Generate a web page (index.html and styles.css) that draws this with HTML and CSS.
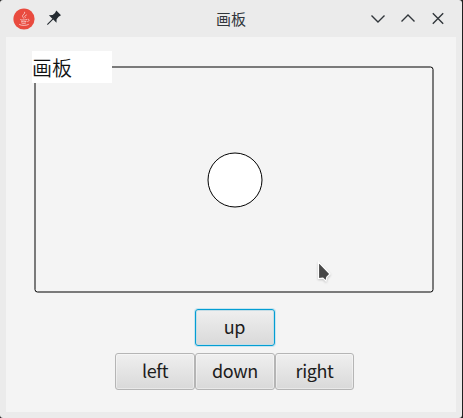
FILE: index.html
```html
<!DOCTYPE html>
<html lang="zh-CN">
<head>
<meta charset="utf-8">
<title>画板</title>
<link rel="stylesheet" href="styles.css">
</head>
<body>
<div class="window">
  <header class="titlebar">
    <div class="side">
      <svg class="java" width="22" height="22" viewBox="0 0 22 22">
        <circle cx="11" cy="11" r="10.6" fill="#e94b3f"/>
        <g fill="none" stroke="#fff" stroke-width=".9" stroke-linecap="round" opacity=".7">
          <path d="M11.8 4.2c.8 1.6-3 2.6-2.2 4.3.3.7.9 1.2 1.1 1.7M13.4 7c-1.6.7-2.2 1.4-1.2 2.500"/>
          <path d="M7.6 11.4c-1.6.8 4 .8 6 .2M8.3 13.3c.6.7 3.4.7 4.8.1M8.6 15c.8.6 3 .6 4 .1M15 11.3c2-.1 1.3 1.9-.3 2.3M6.500 16.6c1.8 1.3 7.6 1 9-.1"/>
        </g>
      </svg>
      <svg class="pin" width="16" height="16" viewBox="0 0 16 16">
        <path d="M10.300 .6 15 5.300l-2.400 1.500-2 2.500-.1 3.500L7.200 9.500 2.200 14.500l-1.300.6.500-1.400L6.400 8.700 2.900 5.200l3.700-.1L9 3z" fill="#252c32"/>
      </svg>
    </div>
    <h1 class="title">画板</h1>
    <div class="side controls">
      <svg width="16" height="16" viewBox="0 0 16 16"><path d="M1.500 4.500 8 11 14.500 4.500"/></svg>
      <svg width="16" height="16" viewBox="0 0 16 16"><path d="M1.500 10.500 8 4 14.500 10.500"/></svg>
      <svg width="16" height="16" viewBox="0 0 16 16"><path d="M2.800 2.300 13.200 12.700M13.200 2.300 2.800 12.700"/></svg>
    </div>
  </header>
  <main class="content">
    <div class="board">
      <svg width="400" height="227" viewBox="0 0 400 227">
        <rect x="1" y="1" width="398" height="225" rx="2.500" fill="none" stroke="#000"/>
        <circle cx="201" cy="114" r="27" fill="#fff" stroke="#000"/>
      </svg>
      <span class="legend">画板</span>
    </div>
    <div class="row"><button class="btn focused">up</button></div>
    <div class="row"><button class="btn">left</button><button class="btn">down</button><button class="btn">right</button></div>
  </main>
  <svg class="cursor" width="20" height="26" viewBox="0 0 20 26">
    <path d="M3.500 3v16.500l4.500-.3 3 3 .8-4 3.200-3.200z" fill="#474747" stroke="#fff" stroke-width="1.200" stroke-linejoin="round"/>
  </svg>
</div>
</body>
</html>
```
FILE: styles.css
```css
body {
  margin: 0;
  background: #202020;
  font-family: "Noto Sans CJK SC", sans-serif;
}
.window {
  position: relative;
  box-sizing: border-box;
  width: 462px;
  height: 418px;
  padding: 0 6px 6px;
  background: #ebebeb;
  border-radius: 3px;
}
.titlebar {
  display: flex;
  align-items: center;
  justify-content: space-between;
  height: 37px;
}
.side {
  display: flex;
  align-items: center;
  width: 90px;
}
.java { margin-left: 7px; }
.pin { margin: -2px 0 0 11px; }
.title {
  margin: 0;
  font-size: 15px;
  font-weight: 400;
  line-height: 37px;
  color: #31363b;
}
.controls {
  justify-content: flex-end;
  gap: 14px;
  padding-right: 10px;
  width: 80px;
}
.controls path {
  fill: none;
  stroke: #31363b;
  stroke-width: 1.4;
}
.content {
  box-sizing: border-box;
  height: 375px;
  padding: 29px 0 0 28px;
  background: #f4f4f4;
}
.board {
  position: relative;
  width: 400px;
  height: 227px;
  margin-bottom: 16px;
}
.board svg { display: block; }
.legend {
  position: absolute;
  left: -2px;
  top: -15px;
  box-sizing: border-box;
  width: 80px;
  height: 32px;
  padding-top: 1px;
  background: #fff;
  color: #111;
  font-size: 20px;
  font-weight: 350;
  line-height: 32px;
}
.row {
  display: flex;
  justify-content: center;
  width: 401px;
  margin-bottom: 7px;
}
.btn {
  box-sizing: border-box;
  width: 80px;
  height: 37px;
  padding: 0 0 2px;
  border: 1px solid #b5b5b5;
  border-radius: 3px;
  background: linear-gradient(#efefef, #d9d9d9);
  box-shadow: inset 0 0 0 1px rgba(255, 255, 255, .4);
  color: #1c1c1c;
  font: 18px/33px "Noto Sans CJK SC", sans-serif;
  letter-spacing: -.4px;
}
.btn:nth-child(3) { width: 79px; }
.focused {
  border-color: #039ed3;
  box-shadow: 0 0 0 1px #c8e5f0, inset 0 0 0 1px #c5dde6;
}
.cursor {
  position: absolute;
  left: 315px;
  top: 259px;
  filter: drop-shadow(0 1px 1px rgba(0, 0, 0, .2));
}
```
